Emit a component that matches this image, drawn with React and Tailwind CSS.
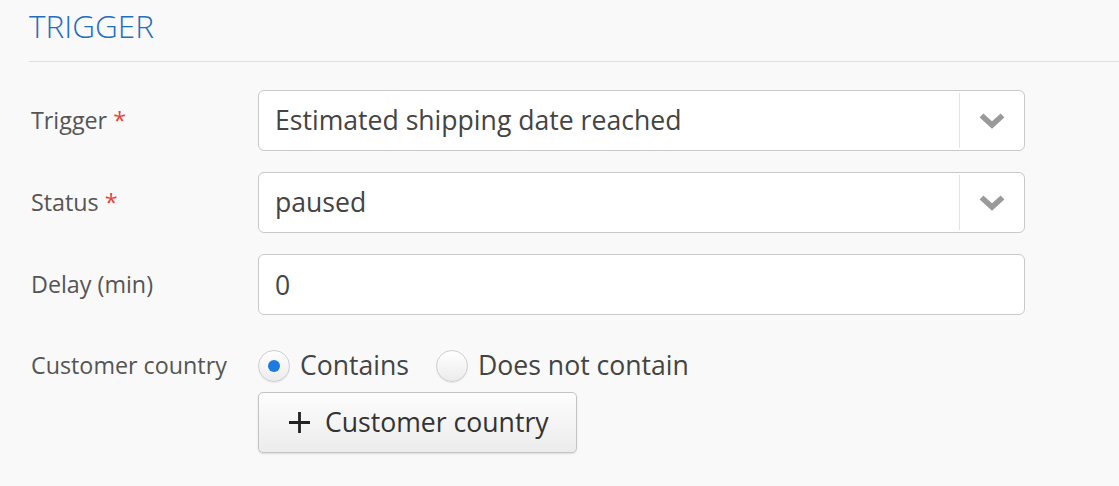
import React, { useState } from 'react';

const Chevron = () => (
  <svg width="26" height="18" viewBox="0 0 26 18" className="block">
    <polyline points="2.5,3.5 13,13 23.5,3.5" fill="none" stroke="#9a9a9a" strokeWidth="5.5" strokeLinecap="butt" strokeLinejoin="miter" />
  </svg>
);

const Label = ({ children, required }) => (
  <div className="w-[229px] shrink-0 pl-[2px] text-[23.3px] text-[#555]">
    {children}
    {required && <span className="ml-[6px] text-[#e8453c]">*</span>}
  </div>
);

const SelectBox = ({ value }) => (
  <div className="flex h-[61px] w-[767px] items-stretch rounded-[6px] border border-[#c9c9c9] bg-white">
    <div className="flex flex-1 items-center pl-[16px] pt-[1px] text-[26.6px] text-[#444]">{value}</div>
    <div className="my-[2px] w-px bg-[#e3e3e3]" />
    <div className="flex w-[64px] items-center justify-center">
      <Chevron />
    </div>
  </div>
);

const Radio = ({ checked, label, onClick }) => (
  <button onClick={onClick} className="flex items-center gap-[10px]">
    <span className="flex h-[32px] w-[32px] items-center justify-center rounded-full border border-[#cfcfcf] bg-gradient-to-b from-white to-[#ececec] shadow-[0_1px_1px_rgba(0,0,0,0.08)]">
      {checked && <span className="h-[12px] w-[12px] rounded-full bg-[#1b7be0]" />}
    </span>
    <span className="text-[26.6px] text-[#444]">{label}</span>
  </button>
);

export default function App() {
  const [mode, setMode] = useState('contains');

  return (
    <div className="h-[486px] w-[1119px] bg-[#f9f9f9] font-['Open_Sans',sans-serif]">
      <div className="pl-[29px] pt-[5px]">
        <h2 className="text-[31.5px] font-light leading-[42px] text-[#1f6fbf]">TRIGGER</h2>
        <div className="mt-[14px] h-px bg-[#dedede]" />
      </div>

      <div className="flex flex-col pl-[29px] pt-[28px]">
        <div className="flex items-center">
          <Label required>Trigger</Label>
          <SelectBox value="Estimated shipping date reached" />
        </div>

        <div className="mt-[21px] flex items-center">
          <Label required>Status</Label>
          <SelectBox value="paused" />
        </div>

        <div className="mt-[21px] flex items-center">
          <Label>Delay (min)</Label>
          <input
            defaultValue="0"
            className="h-[61px] w-[767px] rounded-[6px] border border-[#c9c9c9] bg-white pl-[16px] pt-[1px] text-[26.6px] text-[#444] outline-none"
          />
        </div>

        <div className="mt-[34px] flex items-start">
          <div className="flex h-[33px] items-center">
            <Label>Customer country</Label>
          </div>
          <div className="flex flex-col">
            <div className="flex h-[33px] items-center gap-[27px]">
              <Radio checked={mode === 'contains'} label="Contains" onClick={() => setMode('contains')} />
              <Radio checked={mode === 'not'} label="Does not contain" onClick={() => setMode('not')} />
            </div>
            <button className="mt-[10px] flex h-[61px] w-[319px] items-center rounded-[5px] border border-[#c4c4c4] bg-gradient-to-b from-[#fdfdfd] to-[#ececec] pl-[30px] text-[26.6px] text-[#333] shadow-[0_1px_2px_rgba(0,0,0,0.12)]">
              <svg width="21" height="21" viewBox="0 0 21 21" className="mr-[15px]">
                <path d="M10.5 0v21M0 10.5h21" stroke="#222" strokeWidth="2.8" />
              </svg>
              Customer country
            </button>
          </div>
        </div>
      </div>
    </div>
  );
}
